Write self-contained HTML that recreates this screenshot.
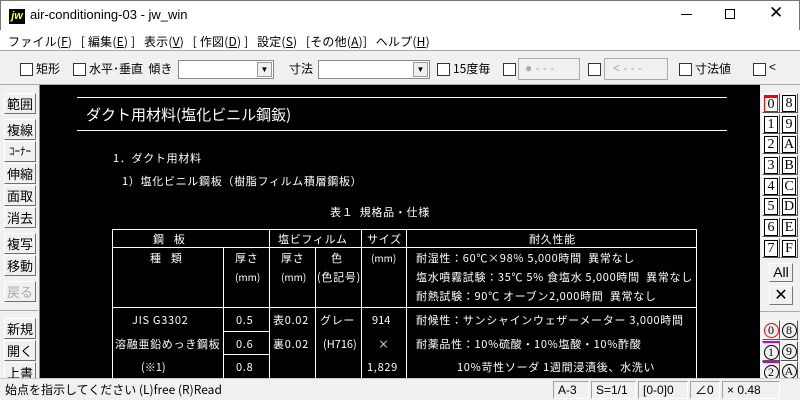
<!DOCTYPE html>
<html><head><meta charset="utf-8"><style>
*{margin:0;padding:0;box-sizing:border-box}
body{width:800px;height:400px;overflow:hidden;background:#f0f0f0;font-family:"Liberation Sans","Noto Sans CJK JP",sans-serif;position:relative;font-size:12px;color:#000}
.a{position:absolute;white-space:nowrap}
.cb{position:absolute;width:13px;height:13px;border:1px solid #333;background:#fff}
.btn{position:absolute;left:4px;width:32px;height:21px;border:1px solid;border-color:#fff #707070 #707070 #fff;background:#f0f0f0;font-size:13px;text-align:center;line-height:19px;font-family:"Noto Sans CJK JP",sans-serif}
.lb{position:absolute;width:18px;height:20px;border:1px solid;border-color:#fff #555 #555 #fff;background:#f0f0f0;font-family:"Liberation Serif",serif;font-size:14px;text-align:center;line-height:18px}
.lb i{font-style:normal;display:block;margin:1px;border:1px solid #000;background:#fff;line-height:15px;height:17px}
.w{color:#fff;font-family:"Noto Sans CJK JP",sans-serif;position:absolute;white-space:nowrap;font-size:11px}
.ls{letter-spacing:0.7px}
.h{position:absolute;background:#fff;height:1px}
.v{position:absolute;background:#fff;width:1px}
.sp{position:absolute;top:381px;height:18px;border:1px solid;border-color:#a0a0a0 #fff #fff #a0a0a0;font-size:12px;line-height:16px;padding-left:4px}
</style></head><body>
<div class="a" style="left:0;top:0;width:800px;height:30px;background:#fff;border:1px solid #777;border-bottom:none"></div>
<div class="a" style="left:9px;top:9px;width:16px;height:15px;background:#000;color:#ff0;font:italic bold 11px 'Liberation Sans';line-height:15px;text-align:center">jw</div>
<div class="a" style="left:30px;top:7px;font-size:13px">air-conditioning-03 - jw_win</div>
<div class="a" style="left:681px;top:14px;width:11px;height:1px;background:#000"></div>
<div class="a" style="left:725px;top:9px;width:10px;height:10px;border:1px solid #000"></div>
<div class="a" style="left:769px;top:3px;font-size:17px">✕</div>
<div class="a" style="left:0;top:30px;width:800px;height:21px;background:#fff;border-bottom:1px solid #aaa"></div>
<div class="a" style="left:8px;top:33px;font-size:12px;font-family:'Noto Sans CJK JP',sans-serif;letter-spacing:0.2px">ファイル(<u>F</u>)&nbsp;&nbsp;&nbsp;[ 編集(<u>E</u>) ]&nbsp;&nbsp;&nbsp;表示(<u>V</u>)&nbsp;&nbsp;&nbsp;[ 作図(<u>D</u>) ]&nbsp;&nbsp;&nbsp;設定(<u>S</u>)&nbsp;&nbsp;&nbsp;[その他(<u>A</u>)]&nbsp;&nbsp;&nbsp;ヘルプ(<u>H</u>)</div>
<div class="cb" style="left:20px;top:63px"></div><div class="a" style="left:36px;top:60px;font-family:'Noto Sans CJK JP'">矩形</div>
<div class="cb" style="left:73px;top:63px"></div><div class="a" style="left:89px;top:60px;font-family:'Noto Sans CJK JP'">水平･垂直&nbsp; 傾き</div>
<div class="a" style="left:178px;top:60px;width:96px;height:19px;background:#fff;border:1px solid #888"><div class="a" style="right:1px;top:1px;width:15px;height:15px;background:#f0f0f0;border:1px solid #999;font-size:8px;text-align:center;line-height:13px">▼</div></div>
<div class="a" style="left:289px;top:60px;font-family:'Noto Sans CJK JP'">寸法</div>
<div class="a" style="left:318px;top:60px;width:112px;height:19px;background:#fff;border:1px solid #888"><div class="a" style="right:1px;top:1px;width:15px;height:15px;background:#f0f0f0;border:1px solid #999;font-size:8px;text-align:center;line-height:13px">▼</div></div>
<div class="cb" style="left:437px;top:63px"></div><div class="a" style="left:453px;top:60px;font-family:'Noto Sans CJK JP'">15度毎</div>
<div class="cb" style="left:503px;top:63px"></div>
<div class="a" style="left:518px;top:58px;width:62px;height:22px;border:1px solid #aaa;color:#aaa;line-height:19px;padding-left:6px">● - - -</div>
<div class="cb" style="left:588px;top:63px"></div>
<div class="a" style="left:604px;top:58px;width:64px;height:22px;border:1px solid #aaa;color:#aaa;line-height:19px;padding-left:8px">&lt; - - -</div>
<div class="cb" style="left:679px;top:63px"></div><div class="a" style="left:695px;top:60px;font-family:'Noto Sans CJK JP'">寸法値</div>
<div class="cb" style="left:753px;top:63px"></div><div class="a" style="left:769px;top:60px">&lt;</div>
<div class="a" style="left:0;top:84px;width:800px;height:1px;background:#aaa"></div>
<div class="a" style="left:40px;top:85px;width:720px;height:293px;background:#000;overflow:hidden">
<div class="h" style="left:37px;top:12px;width:650px"></div>
<div class="h" style="left:37px;top:45px;width:650px"></div>
<div class="w" style="left:46px;top:19px;font-size:15px">ダクト用材料(塩化ビニル鋼鈑)</div>
<div class="w ls" style="left:73px;top:65px">1．ダクト用材料</div>
<div class="w ls" style="left:82px;top:88px">1）塩化ビニル鋼板（樹脂フィルム積層鋼板）</div>
<div class="w ls" style="left:290px;top:119px">表１&nbsp; 規格品・仕様</div>
<div class="h" style="left:72px;top:144px;width:585px"></div>
<div class="h" style="left:72px;top:162px;width:585px"></div>
<div class="h" style="left:72px;top:222px;width:585px"></div>
<div class="h" style="left:183px;top:246px;width:46px"></div>
<div class="h" style="left:183px;top:269px;width:46px"></div>
<div class="v" style="left:72px;top:144px;height:160px"></div>
<div class="v" style="left:183px;top:162px;height:140px"></div>
<div class="v" style="left:229px;top:144px;height:160px"></div>
<div class="v" style="left:275px;top:162px;height:140px"></div>
<div class="v" style="left:321px;top:144px;height:160px"></div>
<div class="v" style="left:366px;top:144px;height:160px"></div>
<div class="v" style="left:656px;top:144px;height:160px"></div>
<div class="w" style="left:113px;top:146px">鋼&nbsp;&nbsp;&nbsp; 板</div>
<div class="w ls" style="left:238px;top:146px">塩ビフィルム</div>
<div class="w ls" style="left:327px;top:146px">サイズ</div>
<div class="w ls" style="left:489px;top:146px">耐久性能</div>
<div class="w" style="left:110px;top:165px">種&nbsp;&nbsp;&nbsp; 類</div>
<div class="w ls" style="left:195px;top:165px">厚さ</div><div class="w" style="left:195px;top:184px;font-size:10px">(mm)</div>
<div class="w ls" style="left:241px;top:165px">厚さ</div><div class="w" style="left:241px;top:184px;font-size:10px">(mm)</div>
<div class="w" style="left:291px;top:165px">色</div><div class="w ls" style="left:277px;top:184px">(色記号)</div>
<div class="w" style="left:331px;top:165px;font-size:10px">(mm)</div>
<div class="w ls" style="left:376px;top:165px">耐湿性：60℃×98% 5,000時間&nbsp; 異常なし</div>
<div class="w ls" style="left:376px;top:184px">塩水噴霧試験：35℃ 5% 食塩水 5,000時間&nbsp; 異常なし</div>
<div class="w ls" style="left:376px;top:203px">耐熱試験：90℃ オーブン2,000時間&nbsp; 異常なし</div>
<div class="w ls" style="left:376px;top:227px">耐候性：サンシャインウェザーメーター 3,000時間</div>
<div class="w ls" style="left:376px;top:251px">耐薬品性：10%硫酸・10%塩酸・10%酢酸</div>
<div class="w ls" style="left:417px;top:274px">10%苛性ソーダ 1週間浸漬後、水洗い</div>
<div class="w ls" style="left:92px;top:227px">JIS G3302</div>
<div class="w ls" style="left:75px;top:251px">溶融亜鉛めっき鋼板</div>
<div class="w" style="left:101px;top:274px">(※1)</div>
<div class="w ls" style="left:196px;top:227px">0.5</div>
<div class="w ls" style="left:196px;top:251px">0.6</div>
<div class="w ls" style="left:196px;top:274px">0.8</div>
<div class="w ls" style="left:233px;top:227px">表0.02</div>
<div class="w ls" style="left:233px;top:251px">裏0.02</div>
<div class="w ls" style="left:280px;top:227px">グレー</div>
<div class="w" style="left:283px;top:251px">(H716)</div>
<div class="w" style="left:332px;top:227px">914</div>
<div class="w" style="left:338px;top:251px">×</div>
<div class="w ls" style="left:327px;top:274px">1,829</div>
</div>
<div class="a" style="left:39px;top:85px;width:1px;height:293px;background:#888"></div>
<div class="btn" style="top:93px">範囲</div>
<div class="btn" style="top:119px">複線</div>
<div class="btn" style="top:141px;font-size:11px">ｺｰﾅｰ</div>
<div class="btn" style="top:163px">伸縮</div>
<div class="btn" style="top:185px">面取</div>
<div class="btn" style="top:207px">消去</div>
<div class="btn" style="top:233px">複写</div>
<div class="btn" style="top:255px">移動</div>
<div class="btn" style="top:281px;color:#aaa">戻る</div>
<div class="a" style="left:0;top:310px;width:38px;height:1px;background:#aaa"></div>
<div class="btn" style="top:318px">新規</div>
<div class="btn" style="top:340px">開く</div>
<div class="btn" style="top:362px">上書</div>
<div class="lb" style="left:762px;top:93px"><i style="border-color:#f00;border-top:3px solid #f00;line-height:13px">0</i></div>
<div class="lb" style="left:780px;top:93px"><i>8</i></div>
<div class="lb" style="left:762px;top:114px"><i>1</i></div><div class="lb" style="left:780px;top:114px"><i>9</i></div>
<div class="lb" style="left:762px;top:134px"><i>2</i></div><div class="lb" style="left:780px;top:134px"><i>A</i></div>
<div class="lb" style="left:762px;top:155px"><i>3</i></div><div class="lb" style="left:780px;top:155px"><i>B</i></div>
<div class="lb" style="left:762px;top:176px"><i>4</i></div><div class="lb" style="left:780px;top:176px"><i>C</i></div>
<div class="lb" style="left:762px;top:196px"><i>5</i></div><div class="lb" style="left:780px;top:196px"><i>D</i></div>
<div class="lb" style="left:762px;top:217px"><i>6</i></div><div class="lb" style="left:780px;top:217px"><i>E</i></div>
<div class="lb" style="left:762px;top:238px"><i>7</i></div><div class="lb" style="left:780px;top:238px"><i>F</i></div>
<div class="a" style="left:769px;top:263px;width:24px;height:19px;border:1px solid;border-color:#fff #777 #777 #fff;font-size:14px;text-align:center;line-height:17px">All</div>
<div class="a" style="left:769px;top:286px;width:24px;height:19px;border:1px solid;border-color:#fff #777 #777 #fff;font-size:16px;text-align:center;line-height:17px;font-weight:lighter">✕</div>
<div class="a" style="left:760px;top:311px;width:40px;height:1px;background:#aaa"></div>
<div class="lb" style="left:762px;top:320px;font-size:12px;line-height:18px"><span style="display:inline-block;width:15px;height:15px;border:1px solid #f00;border-radius:50%;line-height:13px;margin-top:1px">0</span></div>
<div class="lb" style="left:780px;top:320px;font-size:12px;line-height:18px"><span style="display:inline-block;width:15px;height:15px;border:1px solid #000;border-radius:50%;line-height:13px;margin-top:1px">8</span></div>
<div class="lb" style="left:762px;top:341px;font-size:12px;line-height:18px;border-top:2px solid #c0c"><span style="display:inline-block;width:15px;height:15px;border:1px solid #000;border-radius:50%;line-height:13px">1</span></div>
<div class="lb" style="left:780px;top:341px;font-size:12px;line-height:18px"><span style="display:inline-block;width:15px;height:15px;border:1px solid #000;border-radius:50%;line-height:13px;margin-top:1px">9</span></div>
<div class="lb" style="left:762px;top:361px;font-size:12px;line-height:18px;border-top:2px solid #c0c"><span style="display:inline-block;width:15px;height:15px;border:1px solid #000;border-radius:50%;line-height:13px">2</span></div>
<div class="lb" style="left:780px;top:361px;font-size:12px;line-height:18px"><span style="display:inline-block;width:15px;height:15px;border:1px solid #000;border-radius:50%;line-height:13px;margin-top:1px">A</span></div>
<div class="a" style="left:0;top:378px;width:800px;height:22px;background:#f0f0f0;border-top:1px solid #ccc"></div>
<div class="a" style="left:5px;top:381px;font-size:12px;font-family:'Noto Sans CJK JP',sans-serif">始点を指示してください (L)free (R)Read</div>
<div class="sp" style="left:553px;width:36px">A-3</div>
<div class="sp" style="left:591px;width:45px">S=1/1</div>
<div class="sp" style="left:638px;width:50px">[0-0]0</div>
<div class="sp" style="left:690px;width:30px">∠0</div>
<div class="sp" style="left:722px;width:58px">× 0.48</div>
</body></html>
